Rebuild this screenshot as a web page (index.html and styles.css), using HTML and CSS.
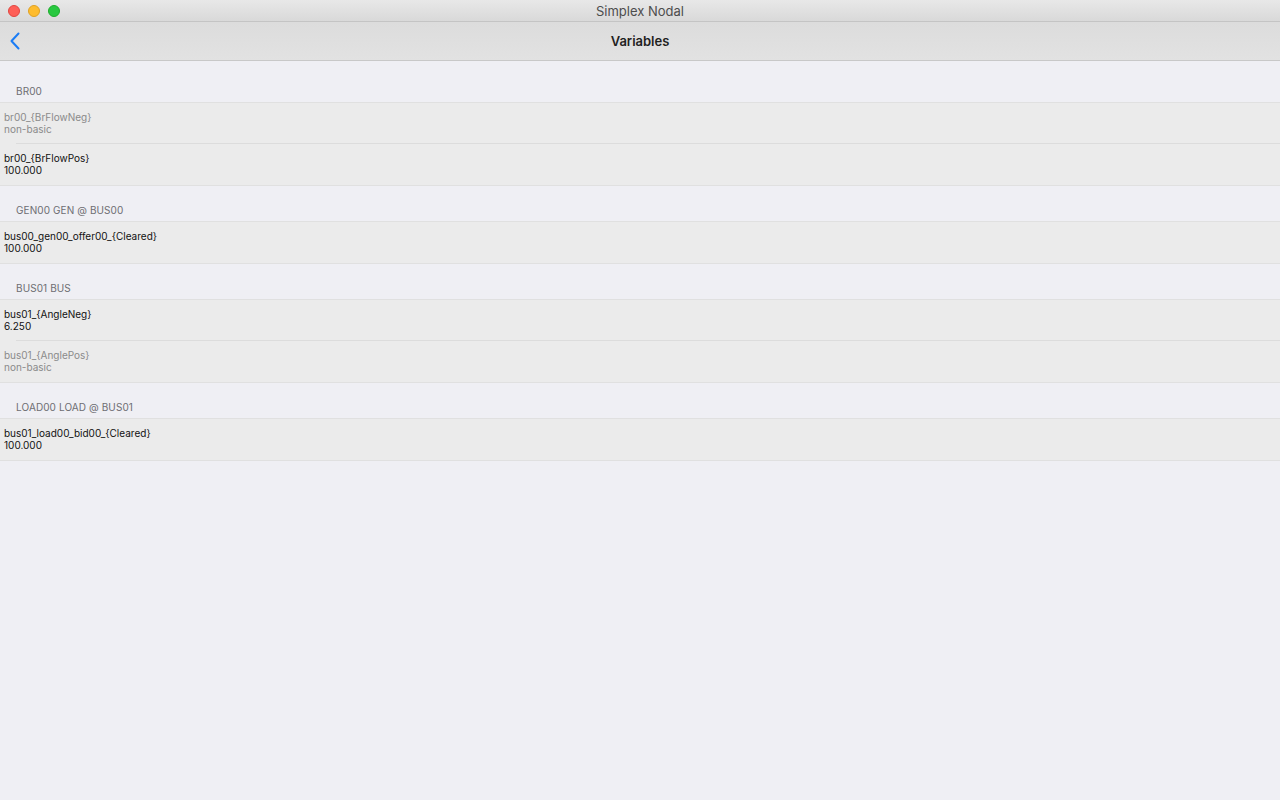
FILE: index.html
```html
<!DOCTYPE html>
<html lang="en">
<head>
    <meta charset="UTF-8">
    <meta name="viewport" content="width=device-width, initial-scale=1.0">
    <title>Simplex Nodal</title>
    <link rel="stylesheet" href="styles.css">
</head>
<body>
    <div class="window">
        <div class="titlebar">
            <div class="lights">
                <span class="light red"></span>
                <span class="light yellow"></span>
                <span class="light green"></span>
            </div>
            <div class="window-title">Simplex Nodal</div>
        </div>

        <div class="navbar">
            <a class="back" href="#">
                <svg width="12" height="18" viewBox="0 0 12 18">
                    <path d="M9.5 1.5 L2.5 9 L9.5 16.5" fill="none" stroke="#1a7cf5" stroke-width="2" stroke-linecap="round" stroke-linejoin="round"/>
                </svg>
            </a>
            <h1>Variables</h1>
        </div>

        <div class="table">
            <div class="section first">
                <div class="section-header">BR00</div>
                <div class="rows">
                    <div class="row muted">
                        <div>br00_{BrFlowNeg}</div>
                        <div>non-basic</div>
                    </div>
                    <div class="row">
                        <div>br00_{BrFlowPos}</div>
                        <div>100.000</div>
                    </div>
                </div>
            </div>

            <div class="section">
                <div class="section-header">GEN00 GEN @ BUS00</div>
                <div class="rows">
                    <div class="row">
                        <div>bus00_gen00_offer00_{Cleared}</div>
                        <div>100.000</div>
                    </div>
                </div>
            </div>

            <div class="section">
                <div class="section-header">BUS01 BUS</div>
                <div class="rows">
                    <div class="row">
                        <div>bus01_{AngleNeg}</div>
                        <div>6.250</div>
                    </div>
                    <div class="row muted">
                        <div>bus01_{AnglePos}</div>
                        <div>non-basic</div>
                    </div>
                </div>
            </div>

            <div class="section">
                <div class="section-header">LOAD00 LOAD @ BUS01</div>
                <div class="rows">
                    <div class="row">
                        <div>bus01_load00_bid00_{Cleared}</div>
                        <div>100.000</div>
                    </div>
                </div>
            </div>
        </div>
    </div>
</body>
</html>
```

FILE: styles.css
```css
* {
    margin: 0;
    padding: 0;
    box-sizing: border-box;
}

body {
    font-family: "Inter", "Liberation Sans", sans-serif;
    background: #efeff4;
    height: 800px;
    overflow: hidden;
}

.window {
    height: 800px;
    display: flex;
    flex-direction: column;
}

.titlebar {
    position: relative;
    height: 22px;
    background: linear-gradient(#e8e8e8, #d9d9d9);
    border-bottom: 1px solid #c4c4c4;
    display: flex;
    align-items: center;
    justify-content: center;
}

.lights {
    position: absolute;
    left: 8px;
    top: 5px;
    display: flex;
    gap: 8px;
}

.light {
    width: 12px;
    height: 12px;
    border-radius: 50%;
}

.red { background: #fe5f57; border: 0.5px solid #e14640; }
.yellow { background: #febc2e; border: 0.5px solid #dfa123; }
.green { background: #28c840; border: 0.5px solid #1dad2b; }

.window-title {
    font-size: 13px;
    color: #4d4d4d;
}

.navbar {
    position: relative;
    height: 39px;
    background: linear-gradient(#dcdcdc, #e2e2e2);
    border-bottom: 1px solid #c8c8c8;
    display: flex;
    align-items: center;
    justify-content: center;
}

.back {
    position: absolute;
    left: 9px;
    top: 10px;
    display: flex;
}

.navbar h1 {
    font-size: 13px;
    font-weight: 600;
    color: #1f1f1f;
}

.table {
    flex: 1;
    padding-top: 6px;
}

.section-header {
    height: 35px;
    padding: 0 16px 5px;
    display: flex;
    align-items: flex-end;
    font-size: 10px;
    color: #6d6d72;
    letter-spacing: 0.1px;
}

.rows {
    background: #ebebeb;
    border-top: 1px solid #e0e0e0;
    border-bottom: 1px solid #e0e0e0;
}

.row {
    position: relative;
    height: 41px;
    padding: 8px 4px 0;
    font-size: 10px;
    line-height: 12px;
    color: #111;
}

/* inset separator between cells of one section */
.row:not(:last-child)::after {
    content: "";
    position: absolute;
    left: 16px;
    right: 0;
    bottom: 0;
    border-top: 1px solid #dcdcdc;
}

.row.muted {
    color: #8a8a8a;
}
```
